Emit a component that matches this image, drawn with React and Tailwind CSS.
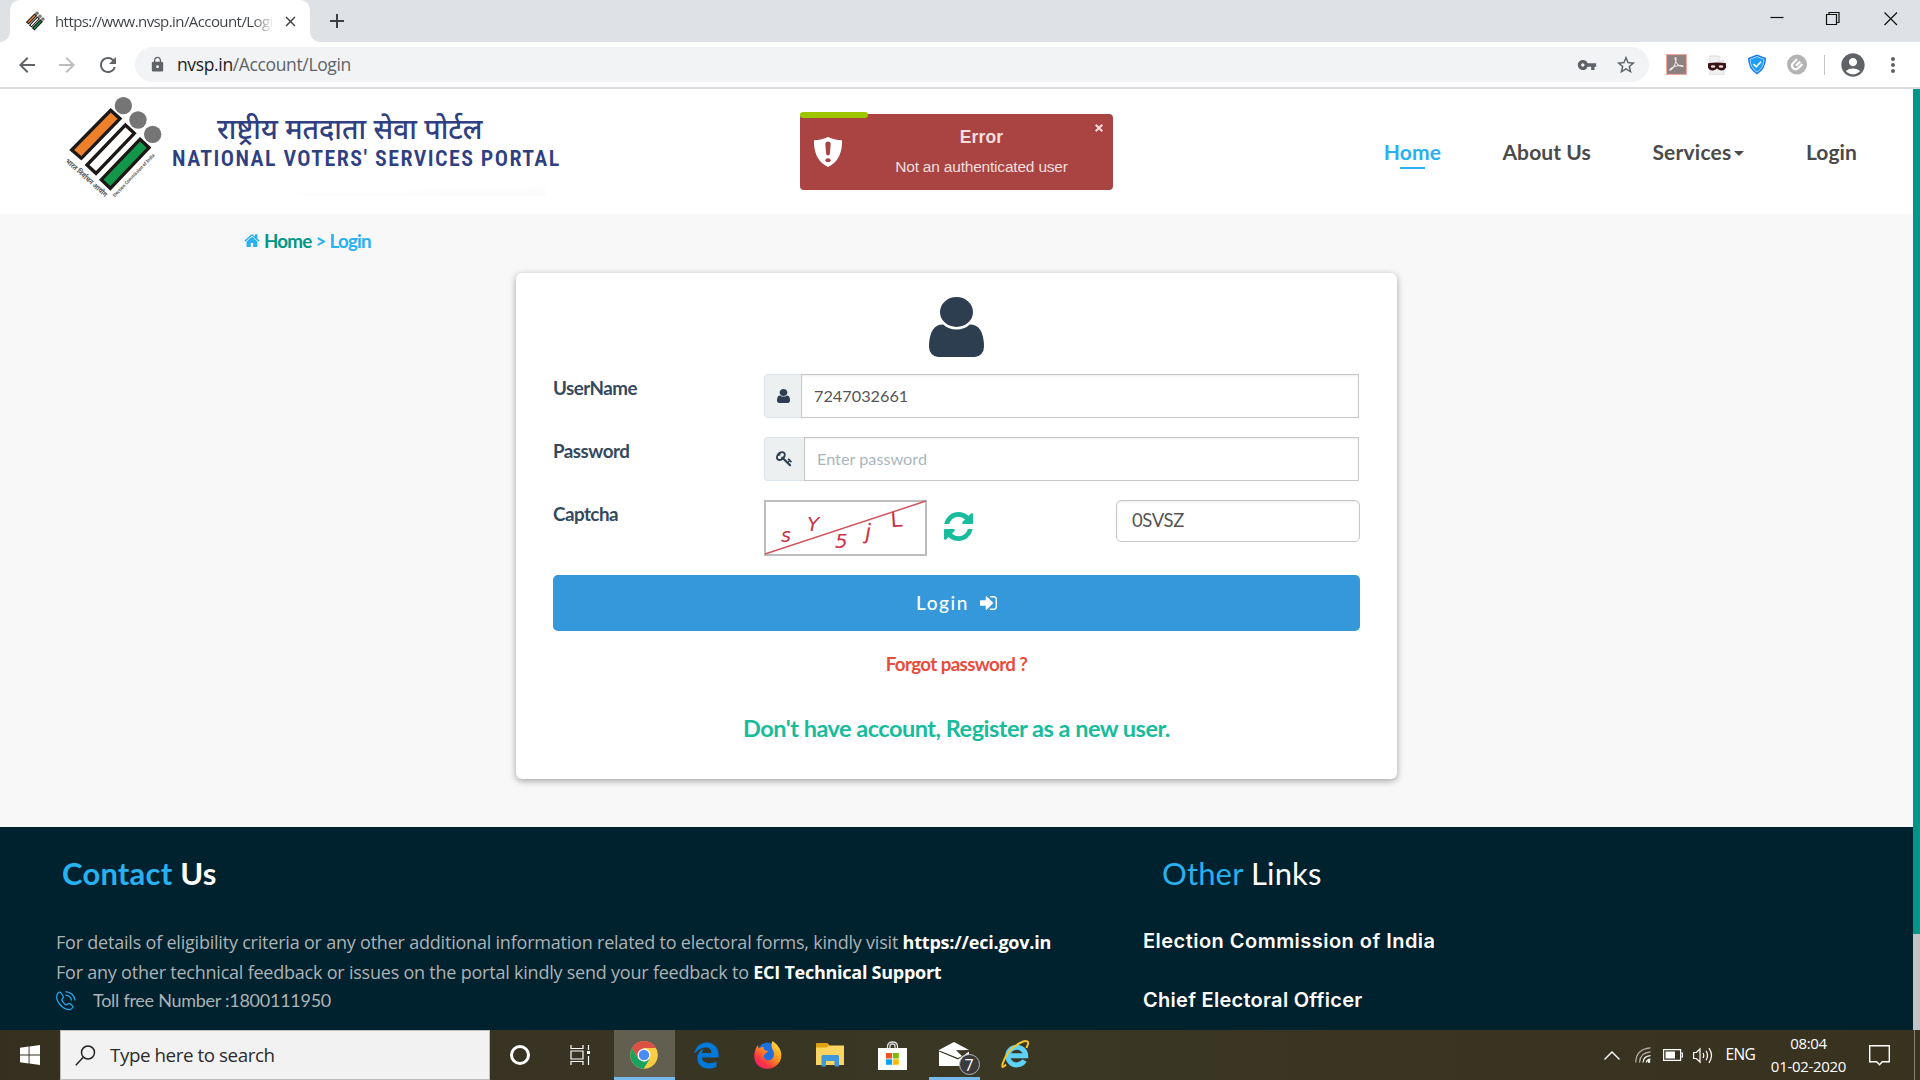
import { MdArrowBack, MdArrowForward, MdRefresh, MdLock, MdVpnKey, MdStarBorder, MdAccountCircle, MdMoreVert, MdClose, MdAdd } from "react-icons/md";
import { FaEdgeLegacy } from "react-icons/fa";

const PATHS = {
  user: "M1536 1399q0 109-62.5 187t-150.5 78h-854q-88 0-150.5-78t-62.5-187q0-85 8.5-160.5t31.5-152 58.5-131 94-89 134.5-34.5q131 128 313 128t313-128q76 0 134.5 34.5t94 89 58.5 131 31.5 152 8.5 160.5zm-256-887q0 159-112.5 271.5t-271.5 112.5-271.5-112.5-112.5-271.5 112.5-271.5 271.5-112.5 271.5 112.5 112.5 271.5z",
  home: "M1472 992v480q0 26-19 45t-45 19h-384v-384h-256v384h-384q-26 0-45-19t-19-45v-480q0-1 .5-3t.5-3l575-474 575 474q1 2 1 6zm223-69l-62 74q-8 9-21 11h-3q-13 0-21-7l-692-577-692 577q-12 8-24 7-13-2-21-11l-62-74q-8-10-7-23.5t11-21.5l719-599q32-26 76-26t76 26l244 204v-195q0-14 9-23t23-9h192q14 0 23 9t9 23v408l219 182q10 8 11 21.5t-7 23.5z",
  refresh: "M1639 1056q0 5-1 7-64 268-268 434.5t-478 166.5q-146 0-282.5-55t-243.5-157l-129 129q-19 19-45 19t-45-19-19-45v-448q0-26 19-45t45-19h448q26 0 45 19t19 45-19 45l-137 137q71 66 161 102t187 36q134 0 250-65t186-179q11-17 53-117 8-23 30-23h192q13 0 22.5 9.5t9.5 22.5zm25-800v448q0 26-19 45t-45 19h-448q-26 0-45-19t-19-45 19-45l138-138q-148-137-349-137-134 0-250 65t-186 179q-11 17-53 117-8 23-30 23h-199q-13 0-22.5-9.5t-9.5-22.5v-7q65-268 270-434.5t480-166.5q146 0 284 55.5t245 156.5l130-129q19-19 45-19t45 19 19 45z",
  signIn: "M1312 896q0 26-19 45l-544 544q-19 19-45 19t-45-19-19-45v-288h-448q-26 0-45-19t-19-45v-384q0-26 19-45t45-19h448v-288q0-26 19-45t45-19 45 19l544 544q19 19 19 45zm352-352v704q0 119-84.5 203.5t-203.5 84.5h-320q-13 0-22.5-9.5t-9.5-22.5q0-4-1-20t-.5-26.5 3-23.5 10-19.5 20.5-6.5h320q66 0 113-47t47-113v-704q0-66-47-113t-113-47h-312l-11.5-1-11.5-3-8-5.5-7-9-2-13.5q0-4-1-20t-.5-26.5 3-23.5 10-19.5 20.5-6.5h320q119 0 203.5 84.5t84.5 203.5z",
  key: "M832 512q0-80-56-136t-136-56-136 56-56 136q0 42 19 83-41-19-83-19-80 0-136 56t-56 136 56 136 136 56 136-56 56-136q0-42-19-83 41 19 83 19 80 0 136-56t56-136zm851 704q0 17-49 66t-66 49q-9 0-28.5-16t-36.5-33-38.5-40-24.5-26l-96 96 220 220q28 28 28 68 0 42-39 81t-81 39q-40 0-68-28l-671-671q-176 131-365 131-163 0-265.5-102.5t-102.5-265.5q0-160 95-313t248-248 313-95q163 0 265.5 102.5t102.5 265.5q0 189-131 365l355 355 96-96q-3-3-26-24.5t-40-38.5-33-36.5-16-28.5q0-17 49-66t66-49q13 0 23 10 6 6 46 44.5t82 79.5 86.5 86 73 78 28.5 41z",
};

function Glyph({ name, box = "0 0 1792 1792", className }) {
  return (
    <svg viewBox={box} preserveAspectRatio="none" className={className} fill="currentColor">
      <path d={PATHS[name]} />
    </svg>
  );
}

/* Election Commission emblem: three bars with dots */
function Emblem({ className, box = "0 9 345 366", captions }) {
  return (
    <svg viewBox={box} className={className}>
      <circle cx="220" cy="59" r="26" fill="#757575" />
      <circle cx="264" cy="102" r="26" fill="#757575" />
      <circle cx="308" cy="145" r="26" fill="#757575" />
      <g stroke="#1c1815" strokeWidth={captions ? 10 : 17} strokeLinejoin="miter">
        <path d="M182 73 L210 98 L94 217 L65 192 Z" fill="#ee7f2b" />
        <path d="M226 117 L253 142 L138 262 L111 237 Z" fill="#fff" />
        <path d="M270 160 L297 185 L181 307 L154 281 Z" fill="#12974a" />
      </g>
      {captions && (
        <g fill="#555" fontFamily='"Noto Sans", sans-serif' fontWeight="700">
          <text transform="translate(45 227) rotate(42)" fontSize="21" textLength="160" lengthAdjust="spacingAndGlyphs">भारत निर्वाचन आयोग</text>
          <text transform="translate(194 334) rotate(-46)" fontSize="14" textLength="174" lengthAdjust="spacingAndGlyphs">Election Commission of India</text>
        </g>
      )}
    </svg>
  );
}

function BrowserChrome() {
  return (
    <>
      <div className="flex h-[42px] items-start bg-[#dee1e6] font-['Open_Sans',sans-serif]">
        <div className="flex h-[42px] w-2.5 items-end bg-white">
          <div className="h-full w-full rounded-br-[10px] bg-[#dee1e6]" />
        </div>
        <div className="flex h-[42px] w-[300px] items-center rounded-t-[10px] bg-white pl-[15px]">
          <Emblem box="40 25 300 300" className="h-5 w-5 shrink-0" />
          <div className="ml-[10px] w-[219px] overflow-hidden bg-gradient-to-r from-[#3c4043] from-90% to-transparent bg-clip-text text-[15px] leading-[40px] tracking-[-0.58px] whitespace-nowrap text-transparent">
            https://www.nvsp.in/Account/Login
          </div>
          <MdClose className="ml-2 h-[17px] w-[17px] shrink-0 text-[#3c4043]" />
        </div>
        <div className="flex h-[42px] w-2.5 items-end bg-white">
          <div className="h-full w-full rounded-bl-[10px] bg-[#dee1e6]" />
        </div>
        <MdAdd className="mt-[9px] ml-[5px] h-6 w-6 text-[#3c4043]" />
        <svg className="mt-3 mr-[22px] ml-auto h-[14px] w-[128px]" viewBox="0 0 128 14" fill="none" stroke="#111" strokeWidth="1.2" shapeRendering="auto">
          <path d="M0.5 5.5H13.5" />
          <path d="M56.5 2.5h10v10h-10zM59 2.5v-2h10v10h-2" />
          <path d="M114.5 0.5l12.5 12.5M127 0.5L114.5 13" />
        </svg>
      </div>
      <div className="flex h-[45px] items-center bg-white text-[#5f6368]">
        <MdArrowBack className="ml-[15px] h-6 w-6" />
        <MdArrowForward className="ml-4 h-6 w-6 text-[#bcbec1]" />
        <MdRefresh className="ml-[17px] h-6 w-6" />
        <div className="ml-[15px] flex h-[35px] w-[1514px] items-center rounded-full bg-[#f1f3f4] pl-[14px]">
          <MdLock className="h-[17px] w-[17px]" />
          <div className="ml-[11px] font-['Open_Sans',sans-serif] text-[17.5px] tracking-[-0.36px]">
            <span className="text-[#202124]">nvsp.in</span>/Account/Login
          </div>
          <MdVpnKey className="ml-auto h-5 w-5" />
          <MdStarBorder className="mr-[12px] ml-[18px] h-[22px] w-[22px]" />
        </div>
        <svg className="ml-[17px] h-[21px] w-[21px]" viewBox="0 0 20 20">
          <rect x="0.5" y="0.5" width="19" height="19" fill="#8d8080" stroke="#f4a79b" />
          <path d="M4 15.500c3-1.500 6.500-8 5.500-11.500-.3-1-1.200-.5-.8 1 .8 4 3.500 6.500 7 7 1 0 .8-1-.5-1-3.500-.2-8 .8-10.700 3-1 1-1.200 1.600-.5 1.500z" fill="none" stroke="#efe6e6" strokeWidth="1" />
        </svg>
        <svg className="ml-5 h-5 w-5" viewBox="0 0 20 20">
          <path d="M3 1h9l5 5v14H3z" fill="#f1f1f1" stroke="#d0d0d0" strokeWidth=".7" />
          <path d="M12 1v5h5" fill="#fff" stroke="#d0d0d0" strokeWidth=".7" />
          <path d="M1 8.200q9-1.600 18 0v4.500q-1.500 3-5 2.700-2.500-.2-4-1.800-1.500 1.600-4 1.800-3.500.3-5-2.700z" fill="#3a1414" />
          <ellipse cx="6" cy="11.500" rx="2.300" ry="1.300" fill="#e8dcdc" />
          <ellipse cx="14" cy="11.500" rx="2.300" ry="1.300" fill="#e8dcdc" />
        </svg>
        <svg className="ml-5 h-[21px] w-5" viewBox="0 0 20 21">
          <path d="M10 .5l9 3.500q0 11-9 16.500Q1 15 1 4z" fill="#1178f2" />
          <path d="M10 2.500l7 2.800q0 8.500-7 12.900-7-4.400-7-12.900z" fill="#1f9dfa" stroke="#d4eeff" strokeWidth=".8" />
          <path d="M6.500 10l2.700 2.800L14 7.800" fill="none" stroke="#fff" strokeWidth="1.600" />
        </svg>
        <svg className="ml-5 h-[21px] w-5" viewBox="0 0 20 20">
          <circle cx="10" cy="10" r="10" fill="#b3b3b3" />
          <path d="M10 4.800L6.200 8.500q-2.500 2.800-.2 5.200 2.500 2.200 5.200-.1l4.200-4M9 11.300l4.300-4.200" fill="none" stroke="#fff" strokeWidth="2.200" />
        </svg>
        <div className="ml-[17px] h-5 w-px bg-[#c4c6c9]" />
        <MdAccountCircle className="ml-3.5 h-7 w-7" />
        <MdMoreVert className="ml-3.5 h-6 w-6" />
      </div>
      <div className="h-0.5 bg-[#dadce0]" />
    </>
  );
}

function Toast() {
  return (
    <div className="absolute top-[25px] left-[800px] flex h-[76px] w-[313px] items-center rounded-[4px] bg-[#a94442] font-['Liberation_Sans',sans-serif] text-[#f2dede]">
      <div className="absolute -top-0.5 left-0 h-1.5 w-[68px] rounded-[3px] bg-[#9ec600]" />
      <svg className="ml-3.5 h-[30px] w-7" viewBox="0 0 28 30">
        <path d="M0 3.200Q8 3 14 0q6 3 14 3.200Q28.600 23 14 30-.6 23 0 3.200z" fill="#fff" />
        <path d="M11.300 7q0-2.500 2.700-2.500T16.700 7l-.8 9.500q-.2 2-1.900 2t-1.900-2z" fill="#a94442" />
        <ellipse cx="14" cy="23.300" rx="2.700" ry="2" fill="#a94442" />
      </svg>
      <div className="ml-[53px] w-[173px] text-center whitespace-nowrap">
        <div className="text-[17.5px] leading-[24px] font-bold tracking-[0.1px]">Error</div>
        <div className="mt-[5px] text-[15.5px] leading-[26px] tracking-[-0.2px]">Not an authenticated user</div>
      </div>
      <svg className="absolute top-[10px] right-[10px] h-2 w-2" viewBox="0 0 8 8" stroke="#f2dede" strokeWidth="2">
        <path d="M.7.7l6.600 6.600M7.300.7L.7 7.300" />
      </svg>
    </div>
  );
}

function Header() {
  return (
    <header className="relative flex h-[125px] bg-white">
      <Emblem captions className="ml-[50px] h-[122px] w-[115px] shrink-0" />
      <div className="mt-[23px] w-[400px] whitespace-nowrap text-[#2f3f82]">
        <div className="ml-[52px] font-['Noto_Sans',sans-serif] text-[28.300px] leading-[32px] font-medium">राष्ट्रीय मतदाता सेवा पोर्टल</div>
        <div className="mt-0.5 ml-[7px] font-['Roboto_Condensed',sans-serif] text-[22px] leading-[26px] font-semibold tracking-[1.420px]">NATIONAL VOTERS' SERVICES PORTAL</div>
        <div className="mt-3 h-3 w-[380px] bg-gradient-to-br from-white via-white to-[#fafafa]" />
      </div>
      <nav className="mr-[56px] ml-auto flex items-center gap-[61.500px] font-['Lato',sans-serif] text-[21px] leading-[30px] font-bold tracking-[0.1px] text-[#4a4a4a]">
        <a className="relative text-[#29b0f0]">
          Home
          <span className="absolute top-[30px] left-4 h-0.5 w-[25px] bg-[#29b0f0]" />
        </a>
        <a>About Us</a>
        <a className="flex items-center tracking-[0.2px]">
          Services
          <span className="mt-1 ml-[3px] border-x-[5px] border-t-[5px] border-x-transparent border-t-[#4a4a4a]" />
        </a>
        <a>Login</a>
      </nav>
      <Toast />
    </header>
  );
}

function Captcha() {
  return (
    <svg className="h-[56px] w-[163px]" viewBox="0 0 163 56">
      <rect x="1" y="1" width="161" height="54" fill="#fff" stroke="#bdbdbd" strokeWidth="2" />
      <g fill="#cc3346" fontFamily='"DejaVu Sans", sans-serif' fontSize="20">
        <text x="17" y="42" fontStyle="oblique" fontSize="19">s</text>
        <text x="43" y="31" fontStyle="oblique">Y</text>
        <text x="71" y="48" fontStyle="oblique">5</text>
        <text x="100" y="39" fontSize="22" transform="rotate(10 102 39)">j</text>
        <text x="127" y="27" fontSize="21" transform="rotate(-4 130 27)">L</text>
      </g>
      <path d="M1 54L162 1" stroke="#cf5560" strokeWidth="1.500" />
    </svg>
  );
}

function LoginCard() {
  const label = "w-[211px] shrink-0 text-[18.75px] leading-[27px] font-bold tracking-[-0.5px] text-[#34495e]";
  const input = "flex grow items-center border border-[#c8c8c8] pl-3 pt-px text-[16.25px] shadow-[inset_0_1px_2px_rgba(0,0,0,0.08)]";
  const addon = "flex items-center justify-center rounded-l-[4px] border border-r-0 border-[#dce4ec] bg-[#ecf0f1] text-[#2c3e50]";
  return (
    <section className="ml-[516px] flex h-[506px] w-[881px] flex-col rounded-[6px] bg-white px-[37px] shadow-[0_2px_7px_rgba(0,0,0,0.35)]">
      <Glyph name="user" box="256 128 1280 1536" className="mx-auto mt-6 h-[60px] w-[55px] shrink-0 text-[#2c3e50]" />
      <div className="mt-[17px] flex h-11">
        <div className={label}>UserName</div>
        <div className="mr-px flex grow">
          <div className={addon + " w-[37px]"}><Glyph name="user" box="256 128 1280 1536" className="h-3.5 w-[13px]" /></div>
          <div className={input + " text-[#555]"}>7247032661</div>
        </div>
      </div>
      <div className="mt-[19px] flex h-11">
        <div className={label}>Password</div>
        <div className="mr-px flex grow">
          <div className={addon + " w-[40px] pb-0.5"}><Glyph name="key" className="h-[17px] w-[17px]" /></div>
          <div className={input + " text-[#a9b6be]"}>Enter password</div>
        </div>
      </div>
      <div className="mt-[19px] flex h-[56px] items-start">
        <div className={label}>Captcha</div>
        <Captcha />
        <Glyph name="refresh" box="128 128 1536 1536" className="mt-3 ml-[17px] h-[29px] w-[29px] text-[#18bc9c]" />
        <div className="ml-auto flex h-[42px] w-[244px] items-center rounded-[5px] border border-[#c8c8c8] pl-[15px] text-[18.500px] tracking-[-0.4px] text-[#555] shadow-[inset_0_1px_2px_rgba(0,0,0,0.08)]">0SVSZ</div>
      </div>
      <button className="mt-[19px] flex h-[56px] shrink-0 items-center justify-center rounded-[5px] bg-[#3498db] text-[19px] font-medium tracking-[1.6px] text-white">
        Login
        <Glyph name="signIn" box="128 256 1536 1280" className="ml-[11px] h-[14px] w-[17px]" />
      </button>
      <a className="mt-[19px] text-center text-[18.75px] leading-[27px] font-bold tracking-[-0.62px] text-[#e74c3c]">Forgot password ?</a>
      <a className="mt-[34px] text-center text-[23.5px] leading-[34px] font-bold tracking-[-0.5px] text-[#18bc9c]">Don't have account, Register as a new user.</a>
    </section>
  );
}

function Footer() {
  return (
    <footer className="flex h-[203px] overflow-hidden bg-[#00212e] whitespace-nowrap">
      <div className="w-[1143px] shrink-0 pl-[56px]">
        <h2 className="mt-[26px] ml-1.5 text-[31px] leading-[40px] font-bold tracking-[0.2px] text-white"><span className="text-[#29b0f0]">Contact</span> Us</h2>
        <div className="mt-[34px] font-['Open_Sans',sans-serif] text-[18px] leading-[30px] tracking-[-0.21px] text-[#adb2b5]">
          <p>For details of eligibility criteria or any other additional information related to electoral forms, kindly visit <b className="text-white">https://eci.gov.in</b></p>
          <p className="tracking-[-0.22px]">For any other technical feedback or issues on the portal kindly send your feedback to <b className="tracking-[-0.260px] text-white">ECI Technical Support</b></p>
        </div>
        <div className="flex items-center text-[18px] leading-[26px] tracking-[-0.27px] text-[#adb2b5]">
          <svg className="h-[21px] w-5" viewBox="0 0 20 19" fill="none" stroke="#29a9f0" strokeWidth="1.200">
            <path d="M2 2Q.3 4 .8 7.500 2 12.500 7 16.500q4 2.600 7.500 2l2.200-1.800q.7-1 0-1.800l-3-2.300q-1-.6-1.800.2l-1 1q-1 .4-2-.5L6.200 10q-.7-1-.2-1.800L7 7q.7-.8.2-1.700L5 1.800Q4 .8 3 1.300z" />
            <path d="M9.500.7Q18 1.500 19 9.500M9.500 4.200Q15 5 15.500 9.500" />
          </svg>
          <span className="ml-[17px]">Toll free Number :1800111950</span>
        </div>
      </div>
      <div>
        <h2 className="mt-[26px] ml-[19px] text-[31px] leading-[40px] tracking-[0.15px] text-white"><span className="text-[#29b0f0]">Other</span> Links</h2>
        <div className="mt-[31px] font-['Inter',sans-serif] text-[20px] leading-[34px] font-semibold tracking-[0.470px] text-white">
          <p>Election Commission of India</p>
          <p className="mt-[25px] tracking-[0.280px]">Chief Electoral Officer</p>
        </div>
      </div>
    </footer>
  );
}

function ChromeIcon() {
  return (
    <svg className="h-7 w-7" viewBox="0 0 28 28">
      <circle cx="14" cy="14" r="13.800" fill="#fbcd45" />
      <path d="M2 7.100A13.800 13.800 0 0 1 26 7.100H14L8 17.500z" fill="#dd5044" />
      <path d="M2 7.100A13.800 13.800 0 0 0 13.600 27.800L20 17.400 14 20.800 8 17.500z" fill="#1ba261" />
      <circle cx="14" cy="14" r="6.500" fill="#fff" />
      <circle cx="14" cy="14" r="5.200" fill="#4b8bf5" />
    </svg>
  );
}

function FirefoxIcon() {
  return (
    <svg className="h-7 w-7" viewBox="0 0 28 28">
      <defs>
        <linearGradient id="ffx" x1="1" y1="0" x2=".2" y2="1">
          <stop offset="0" stopColor="#fff04a" /><stop offset=".45" stopColor="#ff9a1c" /><stop offset=".8" stopColor="#ff3445" /><stop offset="1" stopColor="#e8207a" />
        </linearGradient>
      </defs>
      <circle cx="13.500" cy="11.500" r="10" fill="#1d6fe0" />
      <path d="M18.500 0q7 5 8.500 11 1.500 8-4 13-5 4.300-11 3.800Q4.500 27 1.500 21-.8 15.500 1 10 1.800 6.500 4 4l.6 3.500Q7 5.500 9.500 6q0 2 1.500 3.500l3 .6q-.2 1.500-2.600 2.400Q8.500 15 11 18q3 2.500 7 0 3-3 1.500-7.500Q16 5 18.500 0z" fill="url(#ffx)" />
    </svg>
  );
}

function IeIcon() {
  return (
    <svg className="h-[30px] w-[30px]" viewBox="0 0 30 30" fill="none">
      <path d="M23.500 20.500A9 8.800 0 1 1 24.700 15.700H8" stroke="#5fd0f7" strokeWidth="5" />
      <path d="M5 24.500q-5 5.500-3.300-1Q6 10 18 3.500q10-5 9 .5l-1.500 4" stroke="#f5c52c" strokeWidth="2" />
    </svg>
  );
}

function Taskbar() {
  const slot = "flex h-[50px] w-[62px] shrink-0 items-center justify-center";
  return (
    <div className="flex h-[50px] items-center bg-gradient-to-r from-[#352f20] via-[#3a3725] to-[#38321f] font-['Open_Sans',sans-serif] text-white">
      <svg className="mr-5 ml-5 h-5 w-5 shrink-0" viewBox="0 0 20 20" fill="#fff">
        <path d="M0 2.800L8.600 1.600V9.600H0zM9.500 1.500L20 0V9.600H9.500zM0 10.500H8.600V18.500L0 17.300zM9.500 10.500H20V20L9.500 18.600z" />
      </svg>
      <div className="flex h-full w-[430px] shrink-0 items-center border border-[#bdbdbd] bg-[#f2f2f2] text-[#2b2b2b]">
        <svg className="ml-3.5 h-[21px] w-[21px]" viewBox="0 0 21 21" fill="none" stroke="#222" strokeWidth="1.500">
          <circle cx="13" cy="7.500" r="6.500" /><path d="M8.500 12L.8 20.200" />
        </svg>
        <span className="ml-[14px] text-[18.75px] tracking-[-0.42px]">Type here to search</span>
      </div>
      <div className="flex w-[60px] shrink-0 justify-center"><div className="h-5 w-5 rounded-full border-[3px] border-white" /></div>
      <svg className="ml-5 h-5 w-5 shrink-0" viewBox="0 0 20 20" fill="none" stroke="#fff" strokeWidth="1.200">
        <path d="M1 0v3.500h12V0M1 6h12v8H1zM1 20v-3.500h12V20M18.500 0v5M18.500 11v9" /><path d="M17 6h3v3h-3z" fill="#fff" stroke="none" />
      </svg>
      <div className="ml-[24px] flex h-[50px] w-[61px] shrink-0 items-center justify-center border-b-[3px] border-[#76b9ed] bg-[#625f50] pt-[3px] pr-0.5"><ChromeIcon /></div>
      <div className={slot}><FaEdgeLegacy className="h-[27px] w-[27px] text-[#0078d7]" /></div>
      <div className={slot}><FirefoxIcon /></div>
      <div className={slot}>
        <svg className="h-6 w-7" viewBox="0 0 28 24">
          <path d="M0 1.500Q0 0 1.500 0H11l2.500 2.500H28V22H0z" fill="#fcd462" />
          <path d="M0 1.500Q0 0 1.500 0H11l2 2-2 2.500H0z" fill="#dfa010" />
          <path d="M5.500 23.500V13.500q0-1.500 1.500-1.500h14.500q1.500 0 1.500 1.500v10h-4.500V18h-8.500v5.500z" fill="#3f97dc" />
        </svg>
      </div>
      <div className={slot}>
        <svg className="h-[29px] w-[29px]" viewBox="0 0 29 29">
          <path d="M9.500 8V5.500q0-4.500 5-4.500t5 4.500V8M12 8V5q0-2 2.500-2T17 5v3" fill="none" stroke="#ddd" strokeWidth="1.300" />
          <path d="M0 7h29v22H0z" fill="#fff" />
          <path d="M8 12h6v5.500H8z" fill="#f25022" /><path d="M14.800 12h6v5.500h-6z" fill="#7fba00" />
          <path d="M8 18.300h6v5.500H8z" fill="#00a4ef" /><path d="M14.800 18.300h6v5.500h-6z" fill="#ffb900" />
        </svg>
      </div>
      <div className="flex h-[50px] w-[62px] shrink-0 items-end justify-center">
        <div className="relative h-full w-[51px] border-b-[3px] border-[#76b9ed]">
          <svg className="absolute top-3 left-[10px] h-6 w-[30px]" viewBox="0 0 30 24" fill="#fff">
            <path d="M0 8L15 0l15 8-13 .2L23 14l-4 2L1 8.800 0 9zM0 9.500L19 17.500 30 9.500V24H0z" />
          </svg>
          <div className="absolute top-6 left-[30px] flex h-[21px] w-[21px] items-center justify-center rounded-full border border-[#b5b5b5] bg-[#3b3b3b] text-[16px] leading-none">7</div>
        </div>
      </div>
      <div className={slot}><IeIcon /></div>
      <svg className="ml-auto h-[9px] w-4" viewBox="0 0 16 9" fill="none" stroke="#fff" strokeWidth="1.400"><path d="M.5 8.500L8 1l7.500 7.500" /></svg>
      <svg className="ml-[15px] h-4 w-4" viewBox="0 0 16 16" fill="none" stroke="#fff" strokeWidth="1.200">
        <g stroke="#b8b6ae"><path d="M.7 15.500Q1 2 15.500.8" /><path d="M4.500 15.500Q5 5.500 15.500 4.800" /></g>
        <path d="M8 15.500q.5-6.300 7.500-6.800" /><path d="M11.300 15.500q.3-3 4.200-3.300" /><circle cx="14" cy="14.500" r=".8" fill="#fff" />
      </svg>
      <svg className="ml-3 h-3 w-5" viewBox="0 0 20 12"><path d="M.6.6h17v10.800H.6zM18 4h1.500v4H18" fill="none" stroke="#fff" strokeWidth="1.200" /><path d="M2.500 2.500h9.500v7H2.500z" fill="#fff" /></svg>
      <svg className="ml-2.5 h-[17px] w-5" viewBox="0 0 20 17" fill="none" stroke="#fff" strokeWidth="1.200">
        <path d="M.6 5.500h2.700L7 2v13l-3.700-3.500H.6zM10 6q1.500 2.500 0 5M13 3.800q3 4.700 0 9.400M16 1.200q5 7.300 0 14.600" />
      </svg>
      <span className="ml-[13px] text-[15.500px] tracking-[-0.700px]">ENG</span>
      <div className="ml-[15px] w-[77px] text-center text-[15px] leading-[23px] tracking-[-0.300px]"><div>08:04</div><div>01-02-2020</div></div>
      <svg className="mr-[24px] ml-[22px] h-[21px] w-[21px]" viewBox="0 0 21 21" fill="none" stroke="#fff" strokeWidth="1.400"><path d="M.7.7h19.600v16h-7l-2.800 3-2.800-3h-7z" /></svg>
      <div className="mr-[5px] h-full w-px bg-[#85826f]" />
    </div>
  );
}

export default function App() {
  return (
    <div className="flex h-[1080px] w-[1920px] flex-col overflow-hidden bg-white">
      <BrowserChrome />
      <div className="flex h-[941px] shrink-0 font-['Lato',sans-serif]">
        <main className="flex w-[1913px] flex-col">
          <Header />
          <div className="h-[613px] bg-[#f8f8f8]">
            <div className="flex h-[59px] pt-[13px] pl-[244px] text-[18.75px] leading-[27px] font-bold tracking-[-0.80px] text-[#29b0f0]">
              <Glyph name="home" box="50 240 1700 1300" className="mt-[7px] mr-1 h-[13px] w-4" />
              <span className="text-[#009688]">Home</span>
              <span className="ml-[4px]">&gt;</span>
              <span className="ml-1">Login</span>
            </div>
            <LoginCard />
          </div>
          <Footer />
        </main>
        <div className="w-[7px] bg-[#c1c3c5]"><div className="h-[845px] bg-[#009688]" /></div>
      </div>
      <Taskbar />
    </div>
  );
}
